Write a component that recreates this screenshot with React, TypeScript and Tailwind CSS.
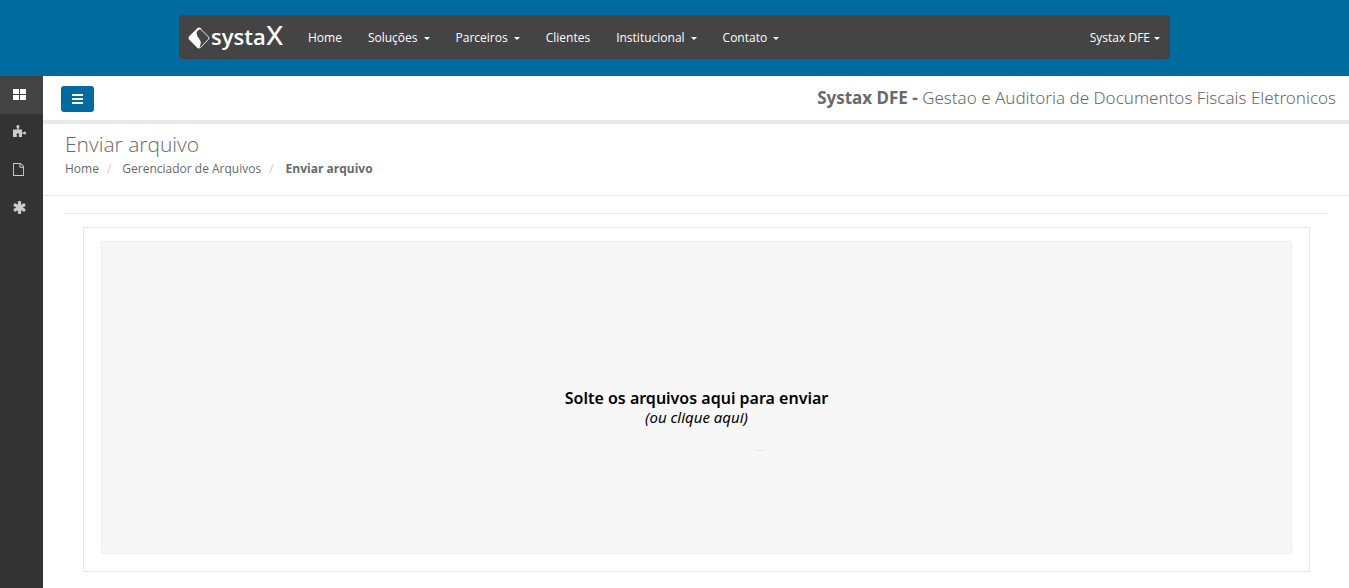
import type { ReactNode } from "react";

const menu = [
  { label: "Home", dropdown: false },
  { label: "Soluções", dropdown: true },
  { label: "Parceiros", dropdown: true },
  { label: "Clientes", dropdown: false },
  { label: "Institucional", dropdown: true },
  { label: "Contato", dropdown: true },
];

const Caret = () => (
  <span className="mt-px border-x-3 border-t-3 border-x-transparent border-t-white" />
);

const Logo = () => (
  <a
    href="#"
    aria-label="Systax"
    className="flex w-24 items-center pt-[2px] text-white"
  >
    <svg viewBox="0 0 22 22" className="size-[22px] shrink-0">
      <path
        d="M12 1.500 20.500 9.800Q21.500 11 20.500 12.200L12.500 20.500Q11 21.500 9.500 20.500"
        fill="none"
        stroke="currentColor"
        strokeWidth="0.9"
      />
      <path
        d="M9.500 1Q11 0 12.500 1L13.500 2Q8.800 2.500 8.600 6.500Q8.800 9 11 11.500Q13.500 14.500 12.500 17.500Q12 19.800 11 21.300Q10 21.300 9 20.500L1 12.500Q0 11 1 9.500Z"
        fill="currentColor"
      />
    </svg>
    <span className="flex items-baseline pb-2 pl-px text-[22px] leading-7 font-semibold">
      systa<span className="text-[34px] leading-7 font-normal">x</span>
    </span>
  </a>
);

const GridIcon = () => (
  <svg viewBox="0 0 13 11" className="h-[11px] w-[13px]" fill="currentColor">
    <path d="M0 0h6v5H0zM7 0h6v5H7zM0 6h6v5H0zM7 6h6v5H7z" />
  </svg>
);

const PuzzleIcon = () => (
  <svg viewBox="0 0 13 12" className="h-3 w-[13px]" fill="currentColor">
    <path d="M0 4.500h4.200V3Q3.300 2.500 3.300 1.500T4.800 0T6.300 1.500T5.600 3v1.500H9V7.500h1.500Q11 6.500 12 6.500T13 8T12 9.500T10.500 8.700H9V12H5.800V10Q6.500 8.300 4.800 8.300T3.800 10V12H0z" />
  </svg>
);

const FileIcon = () => (
  <svg viewBox="0 0 1536 1792" className="h-[13px] w-[11px]" fill="currentColor">
    <path d="M1468 380q28 28 48 76t20 88v1152q0 40-28 68t-68 28h-1344q-40 0-68-28t-28-68v-1600q0-40 28-68t68-28h896q40 0 88 20t76 48zm-444-244v376h376q-10-29-22-41l-313-313q-12-12-41-22zm384 1528v-1024h-416q-40 0-68-28t-28-68v-416h-768v1536h1280z" />
  </svg>
);

const AsteriskIcon = () => (
  <svg viewBox="64 128 1536 1536" className="size-[13px]" fill="currentColor">
    <path d="M1482 1050q46 26 59.500 77.500t-12.500 97.500l-64 110q-26 46-77.500 59.500t-97.500-12.500l-266-153v307q0 52-38 90t-90 38h-128q-52 0-90-38t-38-90v-307l-266 153q-46 26-97.500 12.500t-77.500-59.500l-64-110q-26-46-12.500-97.500t59.500-77.500l266-154-266-154q-46-26-59.500-77.500t12.500-97.500l64-110q26-46 77.500-59.500t97.500 12.500l266 153v-307q0-52 38-90t90-38h128q52 0 90 38t38 90v307l266-153q46-26 97.500-12.500t77.500 59.500l64 110q26 46 12.500 97.500t-59.500 77.500l-266 154z" />
  </svg>
);

const BarsIcon = () => (
  <svg viewBox="0 0 11 10" className="h-[10px] w-[11px]" fill="currentColor">
    <path d="M0 0h11v2H0zM0 4h11v2H0zM0 8h11v2H0z" />
  </svg>
);

const SideLink = ({
  label,
  active,
  children,
}: {
  label: string;
  active?: boolean;
  children: ReactNode;
}) => (
  <a
    href="#"
    aria-label={label}
    className={`flex h-[38px] items-center pl-[13px] ${
      active ? "bg-[#444444] pb-[2px] text-white" : "pb-1 text-[#cccccc]"
    }`}
  >
    {children}
  </a>
);

const Header = () => (
  <header className="h-[76px] bg-[#006b9f] pt-[15px]">
    <nav className="mx-auto flex h-11 max-w-[991px] items-center rounded bg-[#444444] pr-[10px] pl-[9px] text-xs text-white">
      <Logo />
      <ul className="ml-[11px] flex">
        {menu.map((item) => (
          <li key={item.label}>
            <a
              href="#"
              className="flex items-center gap-[6px] px-[13px] pt-[14px] pb-3"
            >
              {item.label}
              {item.dropdown && <Caret />}
            </a>
          </li>
        ))}
      </ul>
      <a href="#" className="ml-auto flex items-center gap-1 pt-[2px]">
        Systax DFE
        <Caret />
      </a>
    </nav>
  </header>
);

const Breadcrumb = () => (
  <ol className="flex text-xs leading-[22px]">
    <li>
      <a href="#">Home</a>
      <span className="px-2 text-[#cccccc]">/</span>
    </li>
    <li className="ml-[3px]">
      <a href="#">Gerenciador de Arquivos</a>
      <span className="px-2 text-[#cccccc]">/</span>
    </li>
    <li className="ml-1 font-bold">Enviar arquivo</li>
  </ol>
);

const UploadArea = () => (
  <div className="flex flex-1 border border-[#e7e7e7] px-[17px] pt-[13px] pb-[17px]">
    <label className="relative flex min-h-72 flex-1 cursor-pointer flex-col items-center justify-center rounded-[3px] border border-[#eeeeee] bg-[#f7f7f7] pt-5 font-['Noto_Sans',sans-serif] leading-[19px] text-black">
      <strong className="text-base leading-[19px] font-semibold">
        Solte os arquivos aqui para enviar
      </strong>
      <em className="text-[15px]">(ou clique aqui)</em>
      <input type="file" multiple className="sr-only" />
      <span className="absolute top-[208px] left-1/2 ml-[59px] h-px w-2 bg-[#e8e8e8]" />
    </label>
  </div>
);

const App = () => {
  return (
    <div className="flex min-h-screen flex-col bg-white font-['Open_Sans',sans-serif] text-[#676a6c]">
      <Header />
      <div className="flex flex-1">
        <aside className="w-[43px] shrink-0 bg-[#333333]">
          <SideLink label="Painel" active>
            <GridIcon />
          </SideLink>
          <SideLink label="Módulos">
            <PuzzleIcon />
          </SideLink>
          <SideLink label="Arquivos">
            <FileIcon />
          </SideLink>
          <SideLink label="Configurações">
            <AsteriskIcon />
          </SideLink>
        </aside>
        <main className="flex min-w-0 flex-1 flex-col">
          <div className="flex h-12 items-center justify-between border-b-4 border-[#e7eaec] pt-px pr-[13px] pl-[18px]">
            <button
              type="button"
              aria-label="Menu"
              className="flex h-[26px] w-[33px] items-center justify-center rounded-[3px] bg-[#006b9f] text-white"
            >
              <BarsIcon />
            </button>
            <p className="pb-[2px] font-['Noto_Sans',sans-serif] text-[17px] font-light">
              <strong className="font-bold">Systax DFE - </strong>
              Gestao e Auditoria de Documentos Fiscais Eletronicos
            </p>
          </div>
          <div className="h-[72px] border-b border-[#e7e7e7] px-[22px] pt-[6px]">
            <h1 className="text-[21px] leading-7 font-light">Enviar arquivo</h1>
            <Breadcrumb />
          </div>
          <section className="flex flex-1 flex-col px-[22px] pt-[17px] pb-4">
            <hr className="border-[#e7e7e7]" />
            <div className="flex flex-1 pt-[13px] pr-[17px] pl-[18px]">
              <UploadArea />
            </div>
          </section>
        </main>
      </div>
    </div>
  );
};

export default App;
